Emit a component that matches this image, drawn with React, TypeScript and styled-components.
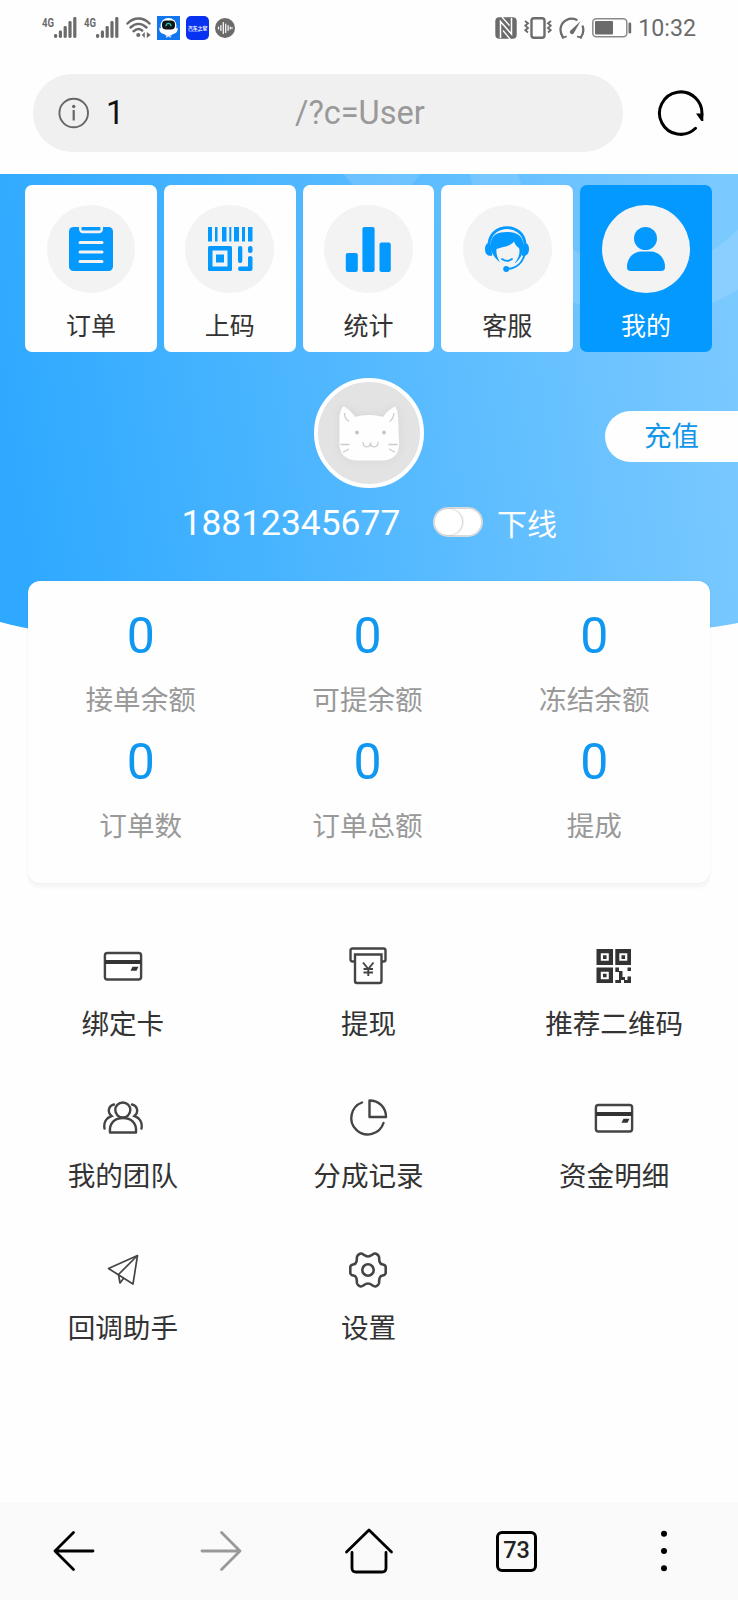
import React from 'react';
import styled, { createGlobalStyle } from 'styled-components';

const GlobalStyle = createGlobalStyle`
  *, *::before, *::after { box-sizing: border-box; }
  body { margin: 0; background: #fefefe; }
  svg { display: block; flex: none; }
  button { border: 0; padding: 0; margin: 0; background: none; font: inherit; color: inherit; }
`;

const BLUE = '#0499ff';
const INK = '#444';
const STATUS = '#6b6b6b';

const Page = styled.div`
  width: 738px;
  height: 1600px;
  display: flex;
  flex-direction: column;
  overflow: hidden;
  background: #fefefe;
  color: #333;
  font-family: Roboto, 'Noto Sans CJK SC', sans-serif;
`;

/* ---------- system status bar ---------- */

const StatusBar = styled.header`
  height: 56px;
  display: flex;
  align-items: center;
  justify-content: space-between;
  padding: 0 42px;
  color: ${STATUS};
`;

const StatusGroup = styled.div<{ $gap: number }>`
  display: flex;
  align-items: center;
  gap: ${(p) => p.$gap}px;
`;

const Clock = styled.span`
  font-size: 23.2px;
  line-height: 28px;
  margin-left: -1px;
`;

/* ---------- address bar ---------- */

const AddressRow = styled.div`
  height: 118px;
  padding: 20px 33px 24px;
  display: flex;
  align-items: center;
  justify-content: space-between;
`;

const AddressField = styled.div`
  width: 590px;
  height: 78px;
  border-radius: 39px;
  background: #f0f0f0;
  display: flex;
  align-items: center;
  padding-left: 25px;
  font-size: 32.5px;
  color: #999;
`;

const HostText = styled.span`
  width: 188px;
  margin-left: 16px;
  margin-right: 1px;
  color: #111;
`;

/* ---------- hero ---------- */

const Hero = styled.section`
  position: relative;
  height: 407px;
  padding-top: 10.5px;
`;

const HeroBackdrop = styled.svg`
  position: absolute;
  left: 0;
  top: 0;
`;

const HeroContent = styled.div`
  position: relative;
`;

const Tabs = styled.nav`
  display: flex;
  gap: 7px;
  margin: 0 26px 0 25px;
`;

const Tab = styled.button<{ $active?: boolean }>`
  flex: 1;
  height: 167.5px;
  border-radius: 7px;
  display: flex;
  flex-direction: column;
  align-items: center;
  padding-top: 20px;
  background: ${(p) => (p.$active ? BLUE : '#fefefe')};
  color: ${(p) => (p.$active ? '#fff' : '#333')};
  font-size: 25px;
  line-height: 36px;
`;

const TabDisc = styled.span`
  width: 88.5px;
  height: 88.5px;
  border-radius: 50%;
  background: #f3f3f3;
  display: grid;
  place-items: center;
  margin-bottom: 16px;
`;

const ProfileRow = styled.div`
  display: grid;
  grid-template-columns: 1fr 110px 1fr;
  align-items: center;
  margin-top: 25.5px;
`;

const Avatar = styled.div`
  grid-column: 2;
  width: 110px;
  height: 110px;
  border-radius: 50%;
  border: 4px solid #fff;
  background: #e3e3e3;
  display: grid;
  place-items: center;
`;

const RechargeButton = styled.button`
  justify-self: end;
  width: 133px;
  height: 51px;
  margin-top: 7px;
  padding: 0 0 4px 0;
  border-radius: 26px 0 0 26px;
  background: #fefefe;
  color: #1296eb;
  font-size: 27.5px;
`;

const NameRow = styled.div`
  height: 69px;
  display: flex;
  align-items: center;
  padding-left: 181.5px;
  color: #fff;
  font-size: 35.4px;
`;

const PhoneText = styled.span`
  width: 221px;
  padding-top: 1px;
`;

const Switch = styled.span`
  width: 50px;
  height: 30px;
  margin-left: 30.5px;
  border-radius: 15px;
  border: 2px solid #dadada;
  background: #fff;
  display: flex;
`;

const Knob = styled.span`
  width: 27px;
  height: 26px;
  border-radius: 50%;
  background: #fff;
  box-shadow: 1px 0 2px rgba(0, 0, 0, 0.22);
`;

const SwitchText = styled.span`
  margin: 6px 0 0 14px;
  font-size: 30px;
  line-height: 40px;
`;

/* ---------- balances ---------- */

const StatsCard = styled.section`
  position: relative;
  height: 302px;
  margin: 0 28px;
  padding: 25px 3px 0 0;
  border-radius: 12px;
  background: #fefefe;
  box-shadow: 0 5px 3px rgba(0, 0, 0, 0.035), 0 0 2px rgba(0, 0, 0, 0.06);
  display: grid;
  grid-template-columns: repeat(3, 226.8px);
  grid-auto-rows: 126px;
  align-content: start;
  justify-content: center;
`;

const Stat = styled.div`
  display: flex;
  flex-direction: column;
  align-items: center;
`;

const StatValue = styled.span`
  height: 60px;
  line-height: 61px;
  font-size: 50px;
  color: #0f97f2;
`;

const StatLabel = styled.span`
  margin-top: 15px;
  line-height: 40px;
  font-size: 27.6px;
  color: #999;
`;

/* ---------- menu ---------- */

const Menu = styled.section`
  flex: 1;
  padding-top: 63px;
  padding-right: 1px;
  display: grid;
  grid-template-columns: repeat(3, 1fr);
  grid-auto-rows: 152px;
  align-content: start;
`;

const MenuItem = styled.button`
  display: flex;
  flex-direction: column;
  align-items: center;
  gap: 19px;
  font-size: 27.6px;
  line-height: 40px;
`;

/* ---------- browser toolbar ---------- */

const Toolbar = styled.footer`
  height: 98px;
  background: #fafafa;
  display: grid;
  grid-template-columns: repeat(5, 1fr);
  place-items: center;
`;

const TabCount = styled.span`
  width: 41px;
  height: 41px;
  border: 3px solid #000;
  border-radius: 6px;
  display: grid;
  place-items: center;
  font-size: 23.5px;
  line-height: 1;
  font-weight: 500;
  color: #222;
`;

/* ---------- status icons ---------- */

const Signal = () => (
  <svg width="36" height="24" viewBox="0 0 36 24" fill={STATUS}>
    <text x="0" y="10.5" fontFamily="Roboto, sans-serif" fontWeight="700" fontSize="12" textLength="12" lengthAdjust="spacingAndGlyphs">4G</text>
    {[4, 7.5, 12, 17, 21].map((h, i) => (
      <rect key={i} x={12 + i * 4.8} y={22 - h} width="3.2" height={h} rx="1.4" />
    ))}
  </svg>
);

const Wifi = () => (
  <svg width="25" height="24" viewBox="0 0 25 24" fill="none" stroke={STATUS} strokeWidth="2.5" strokeLinecap="round">
    <path d="M1.5 7.5C8 .8 17 .8 23.5 7.5M4.5 11.5c5-4.7 11-4.7 16 0M7.6 15.2c3-2.7 6-2.8 8.600-.8" />
    <circle cx="12.300" cy="19" r="2.100" fill={STATUS} stroke="none" />
    <path d="M18.800 16v6l-3-3zM20.800 16v6l4-3z" fill={STATUS} stroke="none" />
  </svg>
);

const RobotBadge = () => (
  <svg width="23" height="24" viewBox="0 0 23 24">
    <rect width="23" height="24" fill="#1277ee" />
    <circle cx="11.5" cy="10" r="8" fill="#fff" />
    <path d="M2.5 11.5 6 14h11l3.500-2.500c.8 3.500-1.500 6-4.500 6.500-2 2.500-7 2.500-9 0-3-.5-5.300-3-4.500-6.500z" fill="#fff" />
    <rect x="5" y="4.500" width="13" height="9" rx="4" fill="#10151c" />
    <path d="M9 10.300c.2-4 4.800-4 5 0" fill="none" stroke="#28c8a8" strokeWidth="1.300" />
    <path d="M9.500 21.500c0-2 4-2 4 0" fill="none" stroke="#fff" strokeWidth="1.200" />
  </svg>
);

const AutoBadge = () => (
  <svg width="23" height="24" viewBox="0 0 23 24" style={{ overflow: 'visible' }}>
    <rect width="23" height="24" rx="5" fill="#0632f0" />
    <text x="2" y="13.500" fill="#fff" fontFamily="'Noto Sans CJK SC', sans-serif" fontWeight="700" fontSize="4.800">汽车之家</text>
    <path d="M3 15.300h11" stroke="#8ea6ff" strokeWidth=".8" />
  </svg>
);

const VoiceBadge = () => (
  <svg width="20" height="20" viewBox="0 0 20 20">
    <circle cx="10" cy="10" r="10" fill={STATUS} />
    <path d="M3.500 9v2M5.900 7.500v5M8.300 4.500v11M10.700 6v8.500M13.100 7.500v5M15.300 9v2M17 9.500v1" stroke="#fff" strokeWidth="1.200" strokeLinecap="round" />
  </svg>
);

const Nfc = () => (
  <svg width="22" height="22" viewBox="0 0 22 22">
    <rect x=".3" y=".3" width="21.400" height="21.400" rx="4" fill={STATUS} />
    <path d="M5.500 21V4.500l11 12.500V1" fill="none" stroke="#fff" strokeWidth="1.500" />
    <path d="M7 0l7.500 8.500" fill="none" stroke="#fff" strokeWidth="1.300" />
    <path d="M8 13.500l7 8.500" fill="none" stroke="#fff" strokeWidth="1.300" />
  </svg>
);

const Vibrate = () => (
  <svg width="28" height="22" viewBox="0 0 28 22" fill="none" stroke={STATUS}>
    <rect x="7.500" y="1.300" width="13" height="19.400" rx="2.500" strokeWidth="2.400" />
    <path d="M1 4l3 2.300L1.300 8.600l2.700 2.300-2.700 2.300 2.700 2.300M27 4l-3 2.300 2.700 2.300-2.700 2.300 2.700 2.300-2.700 2.300" strokeWidth="1.900" />
  </svg>
);

const Gauge = () => (
  <svg width="26" height="23" viewBox="0 0 26 23" fill="none" stroke={STATUS} strokeWidth="2.300" strokeLinecap="round">
    <path d="M4 20.500C-.6 13.500 1.500 6 7.500 3c3.500-1.800 7-1.600 10-.2M23.800 9.500c1 3.700.7 7.500-2 11" />
    <path d="M4 20.500l3-.8M21.800 20.500l-3-.8" strokeWidth="1.800" />
    <path d="M21.500 4.200 14.600 16.500a2.200 2.200 0 0 1-3.600-2.400z" fill={STATUS} stroke="none" />
  </svg>
);

const Battery = () => (
  <svg width="40" height="20" viewBox="0 0 40 20">
    <rect x=".8" y=".8" width="34" height="18" rx="3.500" fill="none" stroke="#8a8a8a" strokeWidth="1.500" />
    <rect x="3" y="3" width="18" height="13.500" rx="1" fill={STATUS} />
    <rect x="36.500" y="4.500" width="2.700" height="11" rx="1.300" fill={STATUS} />
  </svg>
);

/* ---------- address icons ---------- */

const Info = () => (
  <svg width="32" height="32" viewBox="0 0 32 32">
    <circle cx="15.700" cy="16" r="14.300" fill="none" stroke="#666" strokeWidth="1.900" />
    <circle cx="15.700" cy="9.500" r="1.700" fill="#666" />
    <path d="M15.700 13v10.500" stroke="#666" strokeWidth="2.200" />
  </svg>
);

const Reload = () => (
  <svg width="48" height="48" viewBox="0 0 48 48">
    <path d="M38.500 39.300A21.200 21.200 0 1 1 44.700 27" fill="none" stroke="#000" strokeWidth="3" strokeLinecap="round" />
    <path d="M39 24.500h7.300V32h-2z" fill="#000" />
  </svg>
);

/* ---------- tab icons ---------- */

const OrdersIcon = () => (
  <svg width="46" height="46" viewBox="0 0 46 46">
    <rect x="1" y="1" width="44" height="44" rx="4.500" fill={BLUE} />
    <path d="M11 0v2.500c0 3 1.500 4.800 4 4.800h16c2.500 0 4-1.800 4-4.800V0" fill="#f3f3f3" />
    <rect x="13.500" y="1" width="19" height="3.600" rx="1" fill={BLUE} />
    <path d="M12 16.500h22M12 26h22M12 35.500h22" stroke="#f3f3f3" strokeWidth="3" strokeLinecap="round" />
  </svg>
);

const ScanIcon = () => (
  <svg width="46" height="46" viewBox="0 0 46 46" fill={BLUE}>
    <path d="M1 1h4v14.500H1zM8 1h2.500v14.500H8zM15 1h4.500v14.500H15zM22.300 1h2v14.500h-2zM27 1h5v14.500h-5zM35 1h3v14.500h-3zM41 1h4.500v14.500H41z" />
    <path d="M1 21.500q0-1.500 1.500-1.500h21q1.500 0 1.500 1.500v22q0 1.500-1.500 1.500h-21Q1 45 1 43.500zM5.500 24.500v16h15v-16z" fillRule="evenodd" />
    <rect x="9" y="28.500" width="8" height="8" />
    <rect x="31" y="20" width="4.300" height="17" rx="2" />
    <rect x="41" y="20" width="4.500" height="7" rx="2" />
    <path d="M41 31.500q0-1.500 2.200-1.500t2.300 1.500V43q0 2-2 2H33q-2 0-2-2.200t2-2.200h8z" />
  </svg>
);

const ChartIcon = () => (
  <svg width="46" height="46" viewBox="0 0 46 46" fill={BLUE}>
    <rect x=".8" y="27" width="12" height="19" rx="2" />
    <rect x="17.400" y="1" width="12.200" height="45" rx="2" />
    <rect x="34.500" y="16.500" width="11.300" height="29.500" rx="2" />
  </svg>
);

const SupportIcon = () => (
  <svg width="46" height="46" viewBox="0 0 46 46">
    <path d="M5 17C8-3.500 38-3.500 41 17" fill="none" stroke={BLUE} strokeWidth="2.800" />
    <path d="M6.500 19C7 8.500 14 6 23 6s16 3 16.500 13c0 8-3.500 15-9 18.500 4-5 6-11 4.500-15.500-2.300-1.300-4.200-4-5-6.500-4.500 5.500-11.500 5.300-17.500 7.500-.5 5 1 10 4 13.500C10.500 32.500 6.500 26 6.500 19z" fill={BLUE} />
    <path d="M6.500 16.500H5c-3 1-4 3.500-4 6.500s1 6 4 6.700h3.300zM39.500 16.500H41c3 1 4 3.500 4 6.500s-1 6-4 6.700h-3.300z" fill={BLUE} />
    <path d="M18 33q5 3.800 10 0" fill="none" stroke={BLUE} strokeWidth="1.800" strokeLinecap="round" />
    <path d="M40.500 29C38 37 32 42.500 24 42.800" fill="none" stroke={BLUE} strokeWidth="2" />
    <circle cx="22.200" cy="43" r="3" fill={BLUE} />
  </svg>
);

const UserIcon = () => (
  <svg width="46" height="46" viewBox="0 0 46 46" fill={BLUE}>
    <circle cx="22.500" cy="12.500" r="11.500" />
    <path d="M4 41c0-10 7.500-15.500 14-15.500h10c6.500 0 14 5.500 14 15.500 0 3-1.500 4-4 4H8c-2.500 0-4-1-4-4z" />
  </svg>
);

const CatFace = () => (
  <svg width="80" height="80" viewBox="0 0 80 80">
    <defs>
      <filter id="catGlow" x="-30%" y="-30%" width="160%" height="160%">
        <feDropShadow dx="0" dy="0" stdDeviation="4" floodColor="#000" floodOpacity="0.07" />
      </filter>
    </defs>
    <path filter="url(#catGlow)" fill="#fefefe" d="M10.500 25c.5-6 2-9.500 4-11.500C19 15.500 23.500 20 26 24q14-4 28 0c3-4 7-8.500 12-10.500 2 3 3 6 3 11.500l1 23c1 14-6.500 19.500-18 19.500H29C17 67.500 9.500 61 10.500 48z" />
    <path d="M15.500 20c0 4 2 7 4.500 8.500M65 20c-.5 4-2 7-4.500 8.500" fill="none" stroke="#ccc" strokeWidth="1.300" />
    <circle cx="28" cy="39.500" r="1.900" fill="#c4c4c4" />
    <circle cx="55" cy="39.500" r="1.900" fill="#c4c4c4" />
    <path d="M34 49.500c.5 6 7.500 5.500 7.500 0 0 5.500 7 6 7.500 0M12 51.500h8M14.500 59l5-2.800M60 51.500h8M60.500 56.200l5 2.800" fill="none" stroke="#ccc" strokeWidth="1.300" strokeLinecap="round" />
  </svg>
);

/* ---------- menu icons ---------- */

const CardIcon = () => (
  <svg width="40" height="40" viewBox="0 0 40 40">
    <rect x="1.900" y="7" width="36.200" height="26.500" rx="2.500" fill="none" stroke={INK} strokeWidth="2.400" />
    <path d="M2 16h36" stroke="#333" strokeWidth="4" />
    <path d="M29.500 20.800H35.500L33.500 24.800h-6z" fill="#333" />
  </svg>
);

const WithdrawIcon = () => (
  <svg width="40" height="40" viewBox="0 0 40 40" fill="none" stroke={INK} strokeWidth="2.400">
    <path d="M7 15.500H4.500q-2 0-2-2V4.500q0-2 2-2h31q2 0 2 2v9q0 2-2 2H33" />
    <path d="M7 8.500h26.500V35q0 2-2 2H9q-2 0-2-2z" />
    <path d="m15 16.500 5.300 6.500 5.200-6.500M15.500 23h9.500M15.500 26.500h9.500M20.300 23v7" strokeWidth="1.900" />
  </svg>
);

const QrIcon = () => (
  <svg width="40" height="40" viewBox="0 0 40 40" fill="#333">
    <path fillRule="evenodd" d="M2.500 3h16.500v16H2.500zM6.800 7.300v7.500h8V7.300zM21.300 3H37v16H21.300zM25.300 7.300v7.500h8V7.300zM2.500 21.500h16.500V37H2.500zM6.800 25.700v7.500h8v-7.500z" />
    <path d="M9 9.300h3.600v3.600H9zM27.500 9.300h3.600v3.600h-3.600zM9 27.700h3.600v3.600H9z" />
    <path d="M21.300 21.500H25V25h3.500v6H31v3h2.500v-3.500H37V37h-7v-3h-3v3h-5.700v-3h3.700v-8h-3.700zM33.500 21.500H37V25h-3.500z" />
  </svg>
);

const TeamIcon = () => (
  <svg width="40" height="40" viewBox="0 0 40 40" fill="none" stroke={INK} strokeWidth="2.400" strokeLinecap="round">
    <circle cx="19.800" cy="12" r="7.500" />
    <path d="M7 34.500C6 25 12 20 20 20s14 5 13 14.500z" strokeLinejoin="round" />
    <path d="M11 6.500C5.500 7.500 4 14.500 8.500 18c-5.500 2-8 7-7 12.500M29 6.500c5.500 1 7 8 2.500 11.500 5.500 2 8 7 7 12.500" />
  </svg>
);

const PieIcon = () => (
  <svg width="40" height="40" viewBox="0 0 40 40" fill="none" stroke={INK} strokeWidth="2.400" strokeLinecap="round" strokeLinejoin="round">
    <path d="M14 4.500a16.500 16.500 0 1 0 21.500 20.500" />
    <path d="M21.500 2.500V19h16.500C38 9.500 31 2.500 21.500 2.500z" />
  </svg>
);

const PlaneIcon = () => (
  <svg width="40" height="40" viewBox="0 0 40 40" fill="none" stroke={INK} strokeWidth="1.700" strokeLinejoin="round">
    <path d="M34.500 5.500 5.500 18.500 30 34z" />
    <path d="M34.500 5.500 15.500 24.500l1.500 8.500 3.800-5" />
  </svg>
);

const GearIcon = () => (
  <svg width="40" height="40" viewBox="0 0 40 40" fill="none" stroke={INK} strokeWidth="2.600" strokeLinejoin="round">
    <path d="M12 3.700C15 2.600 16 6.500 20 6.500s5-3.900 8-2.800q2.500 1 3 3c.5 3.300-.5 4.300 1.500 6.800 1.500 1.500 5 .5 5.200 3.500v6c-.2 3-3.700 2-5.200 3.500-2 2.500-1 3.500-1.500 6.800q-.5 2-3 3c-3 1.100-4-2.800-8-2.800s-5 3.900-8 2.800q-2.500-1-3-3c-.5-3.300.5-4.300-1.500-6.800-1.500-1.500-5-.5-5.200-3.500v-6C2.500 14 6 15 7.500 13.500 9.500 11 8.500 10 9 6.700q.5-2 3-3z" />
    <circle cx="20" cy="20" r="5.700" />
  </svg>
);

/* ---------- toolbar icons ---------- */

const Arrow = ({ forward }: { forward?: boolean }) => (
  <svg width="44" height="44" viewBox="0 0 44 44" fill="none" stroke={forward ? '#999' : '#000'} strokeWidth="2.800" strokeLinecap="round" strokeLinejoin="round">
    {forward ? <path d="M3 22h38M22.500 3.500 41 22 22.500 40.500" /> : <path d="M41 22H3M21.500 3.500 3 22l18.500 18.500" />}
  </svg>
);

const Home = () => (
  <svg width="50" height="46" viewBox="0 0 50 46" fill="none" stroke="#000" strokeWidth="2.800" strokeLinecap="round" strokeLinejoin="round">
    <path d="M2.500 24 25 2l22.500 22M8 24.500V40q0 4 4 4h26q4 0 4-4V24.500" />
  </svg>
);

const More = () => (
  <svg width="8" height="44" viewBox="0 0 8 44">
    <circle cx="4" cy="4.700" r="3" />
    <circle cx="4" cy="22" r="3" />
    <circle cx="4" cy="39.300" r="3" />
  </svg>
);

const tabs = [
  { label: '订单', icon: <OrdersIcon /> },
  { label: '上码', icon: <ScanIcon /> },
  { label: '统计', icon: <ChartIcon /> },
  { label: '客服', icon: <SupportIcon /> },
  { label: '我的', icon: <UserIcon />, active: true },
];

const stats = ['接单余额', '可提余额', '冻结余额', '订单数', '订单总额', '提成'];

const menu = [
  { label: '绑定卡', icon: <CardIcon /> },
  { label: '提现', icon: <WithdrawIcon /> },
  { label: '推荐二维码', icon: <QrIcon /> },
  { label: '我的团队', icon: <TeamIcon /> },
  { label: '分成记录', icon: <PieIcon /> },
  { label: '资金明细', icon: <CardIcon /> },
  { label: '回调助手', icon: <PlaneIcon /> },
  { label: '设置', icon: <GearIcon /> },
];

export default function App() {
  return (
    <Page>
      <GlobalStyle />
      <StatusBar>
        <StatusGroup $gap={6}>
          <Signal />
          <Signal />
          <Wifi />
          <RobotBadge />
          <AutoBadge />
          <VoiceBadge />
        </StatusGroup>
        <StatusGroup $gap={7}>
          <Nfc />
          <Vibrate />
          <Gauge />
          <Battery />
          <Clock>10:32</Clock>
        </StatusGroup>
      </StatusBar>

      <AddressRow>
        <AddressField>
          <Info />
          <HostText>1</HostText>
          <span>/?c=User</span>
        </AddressField>
        <Reload />
      </AddressRow>

      <Hero>
        <HeroBackdrop width="738" height="500" viewBox="0 0 738 500">
          <defs>
            <linearGradient id="sky" x1="0" y1="0.53" x2="1" y2="0.44">
              <stop offset="0" stopColor="#2ea9ff" />
              <stop offset="1" stopColor="#7ac9ff" />
            </linearGradient>
          </defs>
          <path d="M0 0H738V449C590 477 130 485 0 448z" fill="url(#sky)" />
          <circle cx="382" cy="-24" r="45" fill="#fff" fillOpacity="0.12" />
          <circle cx="643.500" cy="-34" r="153.500" fill="none" stroke="#fff" strokeOpacity="0.12" strokeWidth="47" />
        </HeroBackdrop>
        <HeroContent>
          <Tabs>
            {tabs.map((t) => (
              <Tab key={t.label} $active={t.active}>
                <TabDisc>{t.icon}</TabDisc>
                {t.label}
              </Tab>
            ))}
          </Tabs>
          <ProfileRow>
            <Avatar>
              <CatFace />
            </Avatar>
            <RechargeButton>充值</RechargeButton>
          </ProfileRow>
          <NameRow>
            <PhoneText>18812345677</PhoneText>
            <Switch>
              <Knob />
            </Switch>
            <SwitchText>下线</SwitchText>
          </NameRow>
        </HeroContent>
      </Hero>

      <StatsCard>
        {stats.map((label) => (
          <Stat key={label}>
            <StatValue>0</StatValue>
            <StatLabel>{label}</StatLabel>
          </Stat>
        ))}
      </StatsCard>

      <Menu>
        {menu.map((m) => (
          <MenuItem key={m.label}>
            {m.icon}
            {m.label}
          </MenuItem>
        ))}
      </Menu>

      <Toolbar>
        <Arrow />
        <Arrow forward />
        <Home />
        <TabCount>73</TabCount>
        <More />
      </Toolbar>
    </Page>
  );
}
